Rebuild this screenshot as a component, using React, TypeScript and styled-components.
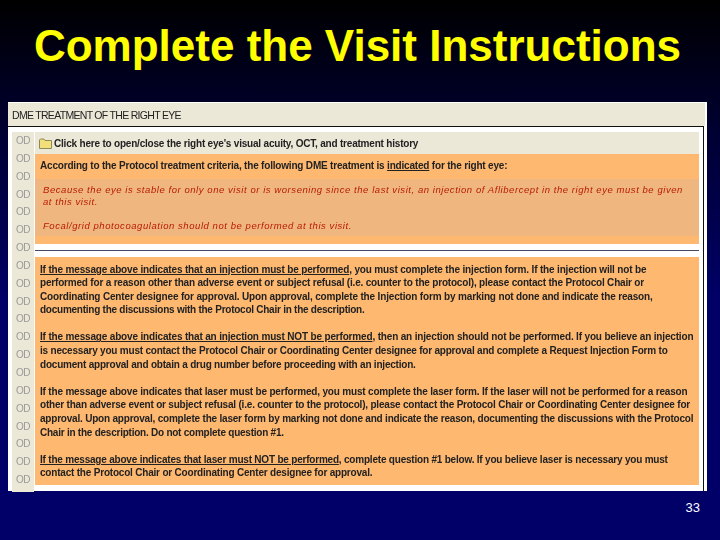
import styled, { createGlobalStyle } from 'styled-components';

const GlobalStyle = createGlobalStyle`
  html, body {
    margin: 0;
    padding: 0;
  }

  #root {
    width: 720px;
    height: 540px;
  }
`;

const Slide = styled.div`
  box-sizing: border-box;
  width: 720px;
  height: 540px;
  padding: 21px 13px 0 8px;
  overflow: hidden;
  background: linear-gradient(180deg, #000000 0%, #000033 25%, #000066 55%, #000068 100%);
  font-family: 'Liberation Sans', Arial, sans-serif;
`;

const Title = styled.h1`
  height: 50px;
  margin: 0 0 31px;
  color: #ffff00;
  font-size: 44px;
  font-weight: 700;
  line-height: 50px;
  text-align: center;
  white-space: nowrap;
`;

const Shot = styled.div`
  box-sizing: border-box;
  height: 389px;
  padding: 1px 0 0;
  background: #ffffff;
  filter: blur(0.3px);
`;

const ShotHeader = styled.div`
  box-sizing: border-box;
  width: 697px;
  height: 23px;
  padding-left: 4px;
  background: #ebe8d8;
  color: #222222;
  font-size: 10.5px;
  letter-spacing: -0.7px;
  line-height: 24px;
`;

const ShotBody = styled.div`
  box-sizing: border-box;
  display: flex;
  gap: 1px;
  width: 696px;
  height: 365px;
  padding: 5px 4px 0 4px;
  border-top: 1px solid #111111;
  border-right: 1px solid #111111;
`;

const EyeColumn = styled.div`
  display: flex;
  flex-direction: column;
  align-items: center;
  width: 22px;
  height: 360px;
  padding-top: 3px;
  box-sizing: border-box;
  background: #ebe8d8;
`;

const EyeLabel = styled.span`
  height: 17.9px;
  color: #999999;
  font-size: 10px;
  letter-spacing: -0.5px;
  line-height: 11px;
`;

const Content = styled.div`
  display: flex;
  flex-direction: column;
  width: 664px;
`;

const ToggleRow = styled.div`
  box-sizing: border-box;
  display: flex;
  align-items: center;
  gap: 2px;
  height: 22px;
  padding-left: 4px;
  background: #ebe8d8;
  color: #222222;
  font-size: 10px;
  font-weight: 700;
  letter-spacing: -0.2px;
  white-space: nowrap;
`;

const Criteria = styled.div`
  height: 90px;
  background: #ffb870;
  color: #222222;
  font-size: 10px;
  font-weight: 700;
`;

const CriteriaHead = styled.div`
  box-sizing: border-box;
  height: 25px;
  padding-left: 5px;
  letter-spacing: -0.19px;
  line-height: 24px;
  white-space: nowrap;
`;

const Decision = styled.div`
  box-sizing: border-box;
  height: 57px;
  padding: 5px 0 0 8px;
  background: #f0b67f;
  color: #b81c00;
  font-size: 9.5px;
  font-style: italic;
  font-weight: 400;
  letter-spacing: 0.56px;
  line-height: 12px;
`;

const DecisionLine = styled.div<{ $gap?: boolean }>`
  margin-top: ${({ $gap }) => ($gap ? '12px' : '0')};
  white-space: nowrap;
`;

const Divider = styled.hr`
  width: 100%;
  height: 1px;
  margin: 6px 0 6px;
  border: 0;
  background: #444a66;
`;

const Instructions = styled.div`
  box-sizing: border-box;
  display: flex;
  flex-direction: column;
  gap: 13.6px;
  height: 228px;
  padding: 5.5px 0 0 5px;
  background: #ffb870;
  color: #222222;
  font-size: 10px;
  font-weight: 700;
  line-height: 13.6px;
`;

const Paragraph = styled.p`
  margin: 0;
  white-space: nowrap;
`;

const TextLine = styled.span<{ $track: number }>`
  display: block;
  letter-spacing: ${({ $track }) => $track}px;
`;

const Footer = styled.div`
  padding: 10px 7px 0 0;
  color: #ffffff;
  font-size: 13px;
  line-height: 14px;
  text-align: right;
`;

const Folder = () => (
  <svg width="13" height="13" viewBox="0 0 13 13">
    <path d="M0.5 3V11.5H12.5V3.5H6L5 2H1.5Z" fill="#f3df7a" stroke="#8a8a5a" strokeWidth="1" />
  </svg>
);

const eyeRows = Array.from({ length: 20 }, (_, i) => i);

const App = () => (
  <Slide>
    <GlobalStyle />
    <Title>Complete the Visit Instructions</Title>
    <Shot>
      <ShotHeader>DME TREATMENT OF THE RIGHT EYE</ShotHeader>
      <ShotBody>
        <EyeColumn>
          {eyeRows.map((row) => (
            <EyeLabel key={row}>OD</EyeLabel>
          ))}
        </EyeColumn>
        <Content>
          <ToggleRow>
            <Folder />
            Click here to open/close the right eye's visual acuity, OCT, and treatment history
          </ToggleRow>
          <Criteria>
            <CriteriaHead>
              According to the Protocol treatment criteria, the following DME treatment is <u>indicated</u> for the right eye:
            </CriteriaHead>
            <Decision>
              <DecisionLine>
                Because the eye is stable for only one visit or is worsening since the last visit, an injection of Aflibercept in the right eye must be given
              </DecisionLine>
              <DecisionLine>at this visit.</DecisionLine>
              <DecisionLine $gap>Focal/grid photocoagulation should not be performed at this visit.</DecisionLine>
            </Decision>
          </Criteria>
          <Divider />
          <Instructions>
            <Paragraph>
              <TextLine $track={-0.165}><u>If the message above indicates that an injection must be performed</u>, you must complete the injection form. If the injection will not be</TextLine>
              <TextLine $track={-0.19}>performed for a reason other than adverse event or subject refusal (i.e. counter to the protocol), please contact the Protocol Chair or</TextLine>
              <TextLine $track={-0.16}>Coordinating Center designee for approval. Upon approval, complete the Injection form by marking not done and indicate the reason,</TextLine>
              <TextLine $track={-0.25}>documenting the discussions with the Protocol Chair in the description.</TextLine>
            </Paragraph>
            <Paragraph>
              <TextLine $track={-0.165}><u>If the message above indicates that an injection must NOT be performed</u>, then an injection should not be performed. If you believe an injection</TextLine>
              <TextLine $track={-0.21}>is necessary you must contact the Protocol Chair or Coordinating Center designee for approval and complete a Request Injection Form to</TextLine>
              <TextLine $track={-0.21}>document approval and obtain a drug number before proceeding with an injection.</TextLine>
            </Paragraph>
            <Paragraph>
              <TextLine $track={-0.18}>If the message above indicates that laser must be performed, you must complete the laser form. If the laser will not be performed for a reason</TextLine>
              <TextLine $track={-0.2}>other than adverse event or subject refusal (i.e. counter to the protocol), please contact the Protocol Chair or Coordinating Center designee for</TextLine>
              <TextLine $track={-0.205}>approval. Upon approval, complete the laser form by marking not done and indicate the reason, documenting the discussions with the Protocol</TextLine>
              <TextLine $track={-0.24}>Chair in the description. Do not complete question #1.</TextLine>
            </Paragraph>
            <Paragraph>
              <TextLine $track={-0.205}><u>If the message above indicates that laser must NOT be performed</u>, complete question #1 below. If you believe laser is necessary you must</TextLine>
              <TextLine $track={-0.2}>contact the Protocol Chair or Coordinating Center designee for approval.</TextLine>
            </Paragraph>
          </Instructions>
        </Content>
      </ShotBody>
    </Shot>
    <Footer>33</Footer>
  </Slide>
);

export default App;
